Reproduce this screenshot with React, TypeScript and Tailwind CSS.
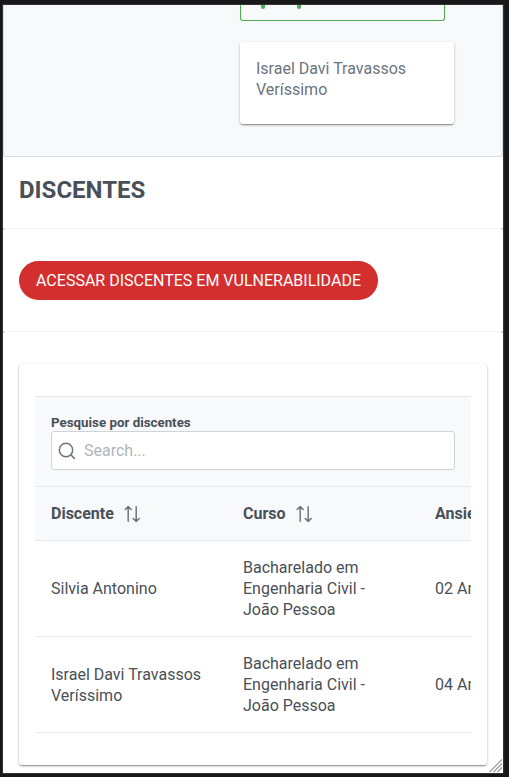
import React from "react";

const cardShadow =
  "shadow-[0_2px_1px_-1px_rgba(0,0,0,0.2),0_1px_2px_0_rgba(0,0,0,0.22),0_1px_3px_0_rgba(0,0,0,0.15)]";

function SortIcon() {
  return (
    <svg width="18" height="18" viewBox="0 0 18 18" fill="none" stroke="#6c757d" strokeWidth="1.5" strokeLinecap="round" strokeLinejoin="round" className="ml-[9px] shrink-0">
      <path d="M5.2 16.2V1.8M2.2 4.5 5.2 1.6 8.2 4.5M13.2 1.8V16.2M10.2 13.5 13.2 16.4 16.2 13.5" />
    </svg>
  );
}

function SearchIcon() {
  return (
    <svg width="18" height="18" viewBox="0 0 18 18" fill="none" stroke="#6c757d" strokeWidth="1.5" strokeLinecap="round" className="shrink-0">
      <circle cx="8" cy="8" r="6.7" />
      <path d="m12.8 12.8 3.6 3.6" />
    </svg>
  );
}

function Divider() {
  return (
    <div className="flex h-px justify-between bg-[#f3f3f3]">
      <span className="h-[2px] w-[2px] bg-[#d8d8d8]" />
      <span className="h-[2px] w-[2px] bg-[#d8d8d8]" />
    </div>
  );
}

const rows = [
  { name: "Silvia Antonino", course: "Bacharelado em Engenharia Civil - João Pessoa", score: "02 Ansiedade" },
  { name: "Israel Davi Travassos Veríssimo", course: "Bacharelado em Engenharia Civil - João Pessoa", score: "04 Ansiedade" },
];

export default function App() {
  return (
    <div className="h-[777px] w-[509px] overflow-hidden bg-[#18181b] pl-[2px] pt-[4px] font-['Roboto',sans-serif] text-base leading-[21px] text-[#495057]">
      <div className="relative h-[770px] w-[502px] overflow-hidden border border-[#333336] bg-white">
        <section className="h-[152px] rounded-b-[3px] border border-t-0 border-[#d5dce2] bg-[#f8f9fb] pl-[236px]">
          <div className="flex h-4 w-[205px] gap-8 rounded-b-[3px] border border-t-0 border-[#4caf50] pl-[20px]">
            <span className="h-1 w-1 rounded-b-sm bg-[#4caf50]" />
            <span className="h-1 w-1 rounded-b-sm bg-[#4caf50]" />
          </div>
          <div className={`mt-[21px] h-[82px] w-[214px] rounded-[3px] bg-white p-4 text-[#6c757d] ${cardShadow}`}>
            Israel Davi Travassos Veríssimo
          </div>
        </section>

        <section className="h-[71px] px-4 pt-[19px]">
          <h2 className="text-2xl font-bold leading-7">DISCENTES</h2>
        </section>
        <Divider />
        <section className="h-[102px] px-4 pt-8">
          <button className="h-[39px] w-[359px] whitespace-nowrap rounded-full bg-[#d32f2f] text-center text-white">
            ACESSAR DISCENTES EM VULNERABILIDADE
          </button>
        </section>
        <Divider />
        <section className="px-4 pt-8">
          <div className={`h-[401px] w-[468px] rounded-[3px] bg-white px-4 pt-8 ${cardShadow}`}>
            <div className="w-[436px] overflow-hidden">
              <div className="w-[576px]">
                <div className="h-[90px] border-t border-[#e4e8ec] bg-[#f8f9fb] px-4 pt-[17px]">
                  <label className="block h-[17px] text-[13.33px] font-bold leading-[17px]">Pesquise por discentes</label>
                  <div className="flex h-[39px] w-[404px] items-center rounded-[3px] border border-[#ced4da] bg-white pl-[6px]">
                    <SearchIcon />
                    <input aria-label="Pesquise por discentes" placeholder="Search..." className="ml-2 min-w-0 flex-1 bg-transparent outline-none placeholder:text-[#b1b5ba]" />
                  </div>
                </div>
                <div className="grid h-[55px] grid-cols-[192px_192px_192px] items-center border-y border-[#e4e8ec] bg-[#f8f9fb] font-bold">
                  <div className="flex items-center pl-4">Discente<SortIcon /></div>
                  <div className="flex items-center pl-4">Curso<SortIcon /></div>
                  <div className="flex items-center pl-4">Ansiedade<SortIcon /></div>
                </div>
                {rows.map((row) => (
                  <div key={row.name} className="grid h-24 grid-cols-[192px_192px_192px] items-center border-b border-[#e9e9e9]">
                    <div className="px-4">{row.name}</div>
                    <div className="px-4">{row.course}</div>
                    <div className="px-4">{row.score}</div>
                  </div>
                ))}
              </div>
            </div>
          </div>
        </section>
        <svg width="14" height="14" viewBox="0 0 14 14" className="absolute bottom-0 right-0" stroke="#999" strokeWidth="1.1">
          <path d="M.5 13 13 .5M4.5 13 13 4.5M8.5 13 13 8.5" />
        </svg>
      </div>
    </div>
  );
}
